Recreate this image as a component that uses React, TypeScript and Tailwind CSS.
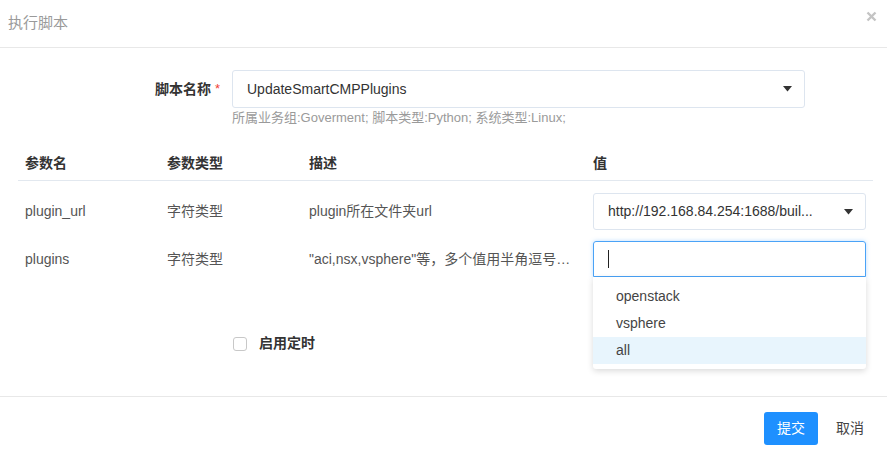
const font = { fontFamily: '"Liberation Sans", "Noto Sans CJK SC", sans-serif' };

function Caret() {
  return (
    <svg width="9" height="6" viewBox="0 0 9 6" className="shrink-0">
      <path d="M0 0 L9 0 L4.5 5.5 Z" fill="#333" />
    </svg>
  );
}

const rows = [
  { name: 'plugin_url', type: '字符类型', desc: 'plugin所在文件夹url' },
  { name: 'plugins', type: '字符类型', desc: '"aci,nsx,vsphere"等，多个值用半角逗号分隔' },
];

export default function App() {
  return (
    <div className="w-[887px] h-[453px] bg-white flex flex-col text-[#555]" style={font}>
      {/* Header */}
      <div className="h-[48px] border-b border-[#e8e8e8] flex items-center justify-between pl-[8px] pr-[10px] shrink-0">
        <span className="text-[15px] text-[#9a9a9a]">执行脚本</span>
        <svg width="11" height="11" viewBox="0 0 11 11" className="-mt-[15px]">
          <path d="M1.5 1.5 L9.5 9.5 M9.5 1.5 L1.5 9.5" stroke="#c4c4c4" strokeWidth="2.4" />
        </svg>
      </div>

      {/* Body */}
      <div className="flex-1 flex flex-col pt-[22px]">
        <div className="flex">
          <div className="w-[232px] pr-[12px] flex justify-end items-start pt-[9px]">
            <span className="text-[14px] font-bold text-[#333]">脚本名称</span>
            <span className="text-[13px] text-[#f04134] ml-[4px]">*</span>
          </div>
          <div className="flex flex-col">
            <div className="w-[573px] h-[38px] border border-[#dde5ef] rounded-[3px] flex items-center justify-between pl-[14px] pr-[12px]">
              <span className="text-[14px] text-[#333]">UpdateSmartCMPPlugins</span>
              <Caret />
            </div>
            <span className="text-[13px] text-[#9a9a9a] mt-[1px] leading-[18px]">
              所属业务组:Goverment; 脚本类型:Python; 系统类型:Linux;
            </span>
          </div>
        </div>

        {/* Table */}
        <div className="mx-[18px] mt-[19px] w-[855px]">
          <div className="flex h-[35px] items-center border-b border-[#e2e8ef] text-[14px] font-bold text-[#333]">
            <div className="w-[142px] pl-[7px]">参数名</div>
            <div className="w-[142px] pl-[7px]">参数类型</div>
            <div className="w-[284px] pl-[7px]">描述</div>
            <div className="w-[287px] pl-[7px]">值</div>
          </div>

          <div className="flex items-center text-[14px] mt-[12px] h-[37px]">
            <div className="w-[142px] pl-[7px]">{rows[0].name}</div>
            <div className="w-[142px] pl-[7px]">{rows[0].type}</div>
            <div className="w-[284px] pl-[7px]">{rows[0].desc}</div>
            <div className="w-[287px] px-[7px]">
              <div className="h-[37px] border border-[#dde5ef] rounded-[3px] flex items-center justify-between pl-[14px] pr-[12px]">
                <span className="text-[14px] text-[#333] truncate">http://192.168.84.254:1688/buil...</span>
                <Caret />
              </div>
            </div>
          </div>

          <div className="flex items-center text-[14px] mt-[11px] h-[36px]">
            <div className="w-[142px] pl-[7px]">{rows[1].name}</div>
            <div className="w-[142px] pl-[7px]">{rows[1].type}</div>
            <div className="w-[284px] pl-[7px] pr-[8px] truncate">{rows[1].desc}</div>
            <div className="w-[287px] px-[7px] relative">
              <div className="h-[36px] border border-[#4aa3f7] rounded-t-[3px] flex items-center pl-[14px] shadow-[0_0_4px_rgba(64,158,255,0.35)]">
                <span className="w-[1px] h-[18px] bg-[#222]" />
              </div>
              <div className="absolute left-[7px] right-[7px] top-[36px] bg-white rounded-b-[3px] shadow-[0_2px_6px_rgba(0,0,0,0.15)] pt-[6px] pb-[5px] z-10">
                <div className="h-[27px] flex items-center pl-[23px] text-[14px] text-[#444]">openstack</div>
                <div className="h-[27px] flex items-center pl-[23px] text-[14px] text-[#444]">vsphere</div>
                <div className="h-[27px] flex items-center pl-[23px] text-[14px] text-[#444] bg-[#e8f5fd]">all</div>
              </div>
            </div>
          </div>
        </div>

        {/* Schedule checkbox */}
        <div className="flex items-center pl-[233px] mt-[56px]">
          <span className="w-[14px] h-[14px] border border-[#c8c8c8] rounded-[3px] bg-white" />
          <span className="ml-[12px] text-[14px] font-bold text-[#333]">启用定时</span>
        </div>
      </div>

      {/* Footer */}
      <div className="h-[57px] border-t border-[#e8e8e8] flex items-center justify-end pr-[23px] shrink-0">
        <button className="w-[54px] h-[33px] rounded-[3px] bg-[#1e90ff] text-white text-[14px] mt-[7px]">提交</button>
        <button className="ml-[18px] text-[14px] text-[#444] mt-[7px]">取消</button>
      </div>
    </div>
  );
}
